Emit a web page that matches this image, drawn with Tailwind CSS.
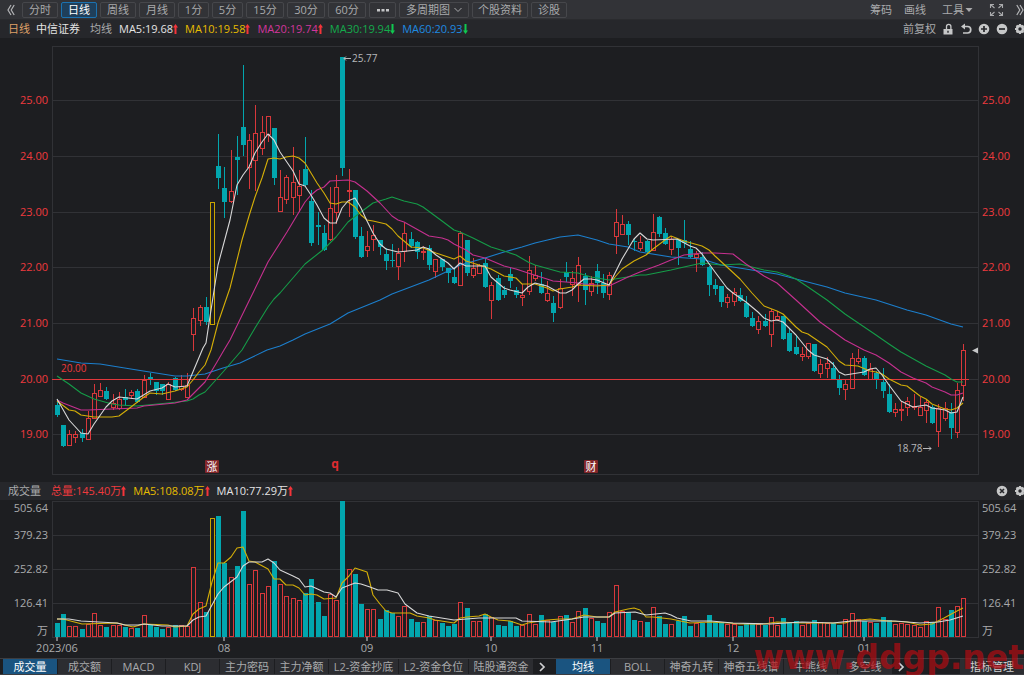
<!DOCTYPE html>
<html lang="zh-CN">
<head>
  <meta charset="UTF-8" />
  <meta name="viewport" content="width=device-width, initial-scale=1.0"/>
  <title>中信证券 - 日线</title>
  <script src="https://cdn.jsdelivr.net/npm/@tailwindcss/browser@4"></script>
  <style>
    body {
      font-family: 'Open Sans', 'Noto Sans CJK SC', sans-serif;
    }
  </style>
</head>
<body class="bg-[#1d1e21] text-[#a9aaac] text-[11px] leading-4 overflow-hidden">

  <svg class="hidden">
    <symbol id="gear" viewBox="0 0 12 12">
      <path d="M6 1v10M1 6h10M2.5 2.5l7 7M9.5 2.5l-7 7" stroke="currentColor" stroke-width="2.2"/>
      <circle cx="6" cy="6" r="3" fill="none" stroke="currentColor" stroke-width="2.4"/>
      <circle cx="6" cy="6" r="1.7" fill="#26272b"/>
    </symbol>
    <symbol id="up" viewBox="0 0 5 10"><path d="M2.5 0L5 3.5H3.5V10h-2V3.5H0z" fill="#f5343a"/></symbol>
    <symbol id="down" viewBox="0 0 5 10"><path d="M2.5 10L5 6.500H3.500V0h-2v6.500H0z" fill="#10c850"/></symbol>
  </svg>

  <!-- period toolbar -->
  <nav class="flex items-center h-5 bg-[#323337] border-b border-[#2a2b2e] whitespace-nowrap overflow-hidden">
    <button class="w-[22px] pl-[7px]" aria-label="收起">
      <svg class="w-2 h-3" viewBox="0 0 8 12" fill="none" stroke="#b4b5b7" stroke-width="1.2"><path d="M4 1L1 6l3 5M7.200 1l-3 5 3 5"/></svg>
    </button>
    <div class="flex items-center gap-[3px]">
      <button class="w-9 h-4 leading-[14px] border border-[#46474b] rounded-xs">分时</button>
      <button class="w-9 h-4 leading-[14px] border border-[#1b72b0] rounded-xs bg-[#1f3f5a] text-white">日线</button>
      <button class="w-9 h-4 leading-[14px] border border-[#46474b] rounded-xs">周线</button>
      <button class="w-9 h-4 leading-[14px] border border-[#46474b] rounded-xs">月线</button>
      <button class="w-[31px] h-4 leading-[14px] border border-[#46474b] rounded-xs">1分</button>
      <button class="w-[31px] h-4 leading-[14px] border border-[#46474b] rounded-xs">5分</button>
      <button class="w-[38px] h-4 leading-[14px] border border-[#46474b] rounded-xs">15分</button>
      <button class="w-[38px] h-4 leading-[14px] border border-[#46474b] rounded-xs">30分</button>
      <button class="w-[38px] h-4 leading-[14px] border border-[#46474b] rounded-xs">60分</button>
      <button class="w-[27px] h-4 flex items-center justify-center border border-[#46474b] rounded-xs" aria-label="更多">
        <svg class="w-3 h-3" viewBox="0 0 12 12" fill="#c4c5c7"><path d="M0 5h3v2.500H0zM4.500 5h3v2.500h-3zM9 5h3v2.500H9z"/></svg>
      </button>
      <button class="w-[70px] h-4 leading-[14px] flex items-center justify-center gap-1 border border-[#46474b] rounded-xs">多周期图
        <svg class="w-2 h-2" viewBox="0 0 8 8" fill="none" stroke="currentColor"><path d="M.5 2L4 5.500 7.500 2"/></svg>
      </button>
      <button class="w-14 h-4 leading-[14px] border border-[#46474b] rounded-xs">个股资料</button>
      <button class="w-9 h-4 leading-[14px] border border-[#46474b] rounded-xs">诊股</button>
    </div>
    <div class="ml-auto flex items-center">
      <button class="mr-3">筹码</button>
      <button class="mr-4">画线</button>
      <button class="mr-4 flex items-center gap-px">工具
        <svg class="w-2 h-2" viewBox="0 0 8 8" fill="currentColor"><path d="M.5 2h7L4 6z"/></svg>
      </button>
      <button class="mr-3" aria-label="全屏">
        <svg class="w-[15px] h-[14px]" viewBox="0 0 15 14" fill="none" stroke="currentColor" stroke-width="1.100"><path d="M1.500 5V1.500H5M1.500 1.500L5.500 5M10 1.500h3.500V5M13.500 1.500L9.500 5M1.500 9v3.500H5M1.500 12.500L5.500 9M10 12.500h3.500V9M13.500 12.500L9.500 9"/></svg>
      </button>
      <button aria-label="展开">
        <svg class="w-2 h-3" viewBox="0 0 8 12" fill="none" stroke="#b4b5b7" stroke-width="1.200"><path d="M.8 1l3 5-3 5M4 1l3 5-3 5"/></svg>
      </button>
    </div>
  </nav>

  <!-- moving averages -->
  <div class="flex items-center h-[18px] pl-2 bg-[#26272b] whitespace-nowrap overflow-hidden">
    <span class="text-[#dfa068] mr-[6px]">日线</span>
    <span class="text-[#e4e4e4] mr-[10px]">中信证券</span>
    <span class="mr-[7px]">均线</span>
    <span class="flex items-center text-[#e4e4e4] mr-[7px]">MA5:19.68<svg class="w-[5px] h-[10px]"><use href="#up"/></svg></span>
    <span class="flex items-center text-[#e6bd00] mr-[7px]">MA10:19.58<svg class="w-[5px] h-[10px]"><use href="#up"/></svg></span>
    <span class="flex items-center text-[#d2369c] mr-[7px]">MA20:19.74<svg class="w-[5px] h-[10px]"><use href="#up"/></svg></span>
    <span class="flex items-center text-[#14ab4c] mr-[7px]">MA30:19.94<svg class="w-[5px] h-[10px]"><use href="#down"/></svg></span>
    <span class="flex items-center text-[#1e8ae0]">MA60:20.93<svg class="w-[5px] h-[10px]"><use href="#down"/></svg></span>
    <div class="ml-auto -mr-0.5 flex items-center gap-[6px] text-[#c6c7c8]">
      <button class="text-[#a9aaac]">前复权</button>
      <button aria-label="锁定"><svg class="w-3 h-3" viewBox="0 0 12 12"><path d="M1.500 6h9v5.500h-9z" fill="currentColor"/><path d="M4.500 6V3.500a2.200 2.200 0 0 1 4.400 0V6" fill="none" stroke="currentColor" stroke-width="1.300"/><path d="M5.300 7.800h1.400v2H5.300z" fill="#26272b"/></svg></button>
      <button aria-label="撤销"><svg class="w-3 h-3" viewBox="0 0 12 12"><path d="M3 3.500h4.500a3.200 3.200 0 0 1 0 6.500H3" fill="none" stroke="currentColor" stroke-width="1.700"/><path d="M5 .5v6L1 3.500z" fill="currentColor"/></svg></button>
      <button aria-label="放大"><svg class="w-3 h-3" viewBox="0 0 12 12"><circle cx="6" cy="6" r="5.300" fill="currentColor"/><path d="M6 3v6M3 6h6" stroke="#26272b" stroke-width="1.700"/></svg></button>
      <button aria-label="缩小"><svg class="w-3 h-3" viewBox="0 0 12 12"><circle cx="6" cy="6" r="5.300" fill="currentColor"/><path d="M3 6h6" stroke="#26272b" stroke-width="1.700"/></svg></button>
      <button aria-label="设置"><svg class="w-3 h-3"><use href="#gear"/></svg></button>
    </div>
  </div>

  <!-- price chart -->
  <svg class="block w-full" viewBox="0 38 1024 444" font-size="11">
    <g stroke="#313236" fill="none" shape-rendering="crispEdges">
      <path d="M52.500 46.500H978.500V474.500H52.500z"/>
      <path d="M53 100.500H978M53 156.500H978M53 212.500H978M53 267.500H978M53 323.500H978M53 379.500H978M53 434.500H978"/>
    </g>
    <g id="candles" shape-rendering="crispEdges"></g>
    <path d="M52 379.500H969" stroke="#e0383c" shape-rendering="crispEdges"/>
    <g fill="none" stroke-width="1.100" stroke-linejoin="round">
      <polyline stroke="#1c7fcd" points="57,359 81,363 100,364 137,370 175,376 187,376 205,374 223,368 240,363 267,350 280,346 293,340 305,334 330,324 348,313 380,300 392,294 429,280 448,271 460,265 485,258 504,252 522,247 535,243 560,237 578,235 597,240 609,244 628,247 640,252 671,257 702,259 721,265 733,267 758,271 777,274 796,279 827,287 845,293 876,300 907,310 926,315 951,324 963,327"/>
      <polyline stroke="#159c48" points="57,376 69,384 81,393 94,399 112,404 119,405 137,406 168,403 187,401 193,399 199,395 205,392 223,372 242,350 255,328 268,307 274,299 280,293 305,264 324,249 336,237 348,222 361,212 373,203 386,199 392,197 404,201 417,204 423,207 442,221 454,230 460,232 473,238 491,247 504,251 516,255 528,262 535,265 560,272 578,273 591,277 609,280 615,279 640,275 646,275 671,270 684,267 702,263 721,265 740,264 752,267 764,270 777,272 789,276 796,279 808,287 827,300 845,314 876,335 889,344 901,352 926,366 945,375 951,379 957,382 963,382"/>
      <polyline stroke="#c5308f" points="57,400 63,403 81,410 88,410 137,408 144,406 175,403 187,400 205,382 217,362 224,350 230,340 249,301 268,262 287,232 305,202 311,195 317,190 324,187 330,181 348,180 355,182 367,191 380,203 392,216 398,220 404,222 429,236 442,238 448,240 454,244 466,250 473,255 485,258 504,266 516,269 528,273 547,279 553,281 566,282 578,283 584,284 609,286 628,277 640,272 659,265 671,260 684,255 702,253 715,253 733,254 746,264 764,276 777,283 796,300 820,322 845,340 864,350 876,355 889,363 901,372 913,378 926,383 932,387 945,392 951,395 957,395 963,393"/>
      <polyline stroke="#d4ae08" points="57,401 69,410 75,411 81,415 94,417 112,417 119,416 131,407 144,397 150,393 162,394 175,391 187,387 193,380 199,372 205,365 211,350 218,323 230,288 242,240 249,216 255,197 262,178 268,159 274,158 280,159 286,157 293,156 299,158 305,163 311,173 317,183 324,193 330,203 336,204 342,202 348,202 355,207 361,215 367,220 373,221 386,224 392,229 398,236 404,241 411,247 423,248 436,253 454,259 460,256 466,261 479,265 491,269 504,276 516,278 522,284 535,284 547,288 553,291 560,289 572,287 578,285 597,286 609,285 615,277 622,269 634,261 640,258 646,255 653,249 665,240 671,236 684,241 702,246 709,250 715,256 727,267 740,279 752,293 764,306 777,311 783,314 796,327 802,332 808,334 827,347 839,361 845,365 858,366 870,371 876,372 882,374 889,379 901,385 907,386 920,396 926,399 932,404 945,409 951,410 957,408 963,403"/>
      <polyline stroke="#d8d8d8" points="57,399 69,420 81,433 88,434 94,424 106,407 112,401 119,397 137,399 150,391 162,388 168,384 175,387 187,386 203,348 206,343 209,323 218,265 230,220 237,185 243,175 249,167 255,153 262,142 268,134 274,140 280,152 293,171 299,184 305,186 311,195 317,205 324,218 330,223 336,223 342,208 348,201 355,198 361,208 367,221 373,233 380,244 386,249 398,252 417,250 423,247 429,249 436,255 448,263 454,269 460,263 466,266 485,266 491,277 504,288 510,290 522,293 528,287 535,283 547,286 560,293 566,293 572,290 578,284 584,279 591,279 597,280 609,285 615,273 622,259 628,249 634,239 640,233 647,239 653,240 677,239 690,246 696,248 702,254 715,272 727,288 733,293 746,302 758,312 764,318 771,321 777,320 783,322 796,335 808,350 814,355 827,359 833,364 839,372 845,375 864,372 870,369 876,368 882,375 889,385 895,393 901,401 907,404 913,407 926,405 932,408 945,410 951,413 957,412 963,397"/>
    </g>
    <g fill="#ef3a3e" text-anchor="end">
      <text x="48" y="104">25.00</text><text x="48" y="160">24.00</text><text x="48" y="216">23.00</text><text x="48" y="271">22.00</text>
      <text x="48" y="327">21.00</text><text x="48" y="383">20.00</text><text x="48" y="438">19.00</text>
    </g>
    <g fill="#ef3a3e">
      <text x="982" y="104">25.00</text><text x="982" y="160">24.00</text><text x="982" y="216">23.00</text><text x="982" y="271">22.00</text>
      <text x="982" y="327">21.00</text><text x="982" y="383">20.00</text><text x="982" y="438">19.00</text>
      <text x="61" y="372" font-size="10">20.00</text>
    </g>
    <g fill="#b6b7b9" font-size="10">
      <text x="352" y="62">25.77</text>
      <text x="897" y="452">18.78</text>
    </g>
    <path d="M344 58.500h7M346 56.500l-2 2 2 2M923 448.500h8M929 446.500l2 2-2 2" stroke="#b6b7b9" fill="none"/>
    <path d="M972 350.500l6-3v6z" fill="#c6c7c8"/>
    <rect x="205" y="460" width="14" height="13" rx="1" fill="#822629"/>
    <text x="212" y="471" text-anchor="middle" fill="#fff">涨</text>
    <rect x="584" y="460" width="14" height="13" rx="1" fill="#822629"/>
    <text x="591" y="471" text-anchor="middle" fill="#fff">财</text>
    <text x="335" y="468" text-anchor="middle" font-size="12" font-weight="700" fill="#e02c30">q</text>
  </svg>

  <!-- volume header -->
  <div class="flex items-center h-[18px] pl-2 bg-[#26272b] whitespace-nowrap overflow-hidden">
    <span class="mr-[10px]">成交量</span>
    <span class="flex items-center text-[#ef3a3e] mr-[7px]">总量:145.40万<svg class="w-[5px] h-[10px]"><use href="#up"/></svg></span>
    <span class="flex items-center text-[#e6bd00] mr-[7px]">MA5:108.08万<svg class="w-[5px] h-[10px]"><use href="#up"/></svg></span>
    <span class="flex items-center text-[#e4e4e4]">MA10:77.29万<svg class="w-[5px] h-[10px]"><use href="#up"/></svg></span>
    <div class="ml-auto -mr-0.5 flex items-center gap-[6px] text-[#c6c7c8]">
      <button aria-label="关闭"><svg class="w-3 h-3" viewBox="0 0 12 12"><circle cx="6" cy="6" r="5.300" fill="currentColor"/><path d="M4 4l4 4M8 4l-4 4" stroke="#26272b" stroke-width="1.600"/></svg></button>
      <button aria-label="设置"><svg class="w-3 h-3"><use href="#gear"/></svg></button>
    </div>
  </div>

  <!-- volume chart -->
  <svg class="block w-full" viewBox="0 500 1024 158" font-size="11" fill="#a9aaac">
    <g stroke="#313236" fill="none" shape-rendering="crispEdges">
      <path d="M52.500 501.500H978.500V637.500H52.500zM53 535.500H978M53 569.500H978M53 603.500H978"/>
    </g>
    <g id="volumes" shape-rendering="crispEdges"></g>
    <g fill="none" stroke-width="1.100" stroke-linejoin="round">
      <polyline stroke="#d4ae08" points="57,619 63,619 82,624 117,623 133,627 144,624 168,625 175,627 187,626 193,614 199,609 206,606 212,582 218,563 224,563 231,557 237,548 243,547 249,561 255,562 268,569 274,579 280,579 286,585 293,585 299,588 305,595 311,594 317,595 324,599 336,598 342,583 349,576 355,568 361,570 367,572 370,583 373,595 380,604 386,611 392,613 410,613 417,616 429,618 435,620 454,623 460,618 467,617 479,616 485,614 491,617 498,620 510,621 522,625 528,623 547,620 560,619 572,619 584,615 597,617 609,617 615,612 628,609 634,608 640,610 646,617 653,617 671,619 690,623 709,622 729,623 739,624 764,624 777,622 802,623 845,623 851,621 870,619 888,621 907,622 920,625 932,624 938,621 944,618 957,611 963,608"/>
      <polyline stroke="#d8d8d8" points="57,619 69,619 81,621 117,623 125,625 138,625 144,624 162,626 187,626 193,620 199,617 206,616 212,605 218,594 224,587 237,577 243,566 249,562 262,562 268,559 274,563 280,570 293,576 299,579 305,587 311,586 324,592 330,593 336,597 342,588 355,583 361,584 370,587 378,590 387,590 398,593 405,604 417,613 429,616 454,620 479,618 516,618 522,621 551,622 572,619 584,617 609,617 615,613 635,612 646,615 665,613 671,615 677,618 691,621 711,621 733,623 770,624 802,622 833,623 851,621 895,621 920,623 938,622 950,620 963,616"/>
    </g>
    <path d="M57 637v4M224 637v4M367 637v4M491 637v4M597 637v4M733 637v4M864 637v4" stroke="#d8d8d8"/>
    <g text-anchor="end">
      <text x="48" y="512">505.64</text><text x="48" y="539">379.23</text><text x="48" y="573">252.82</text><text x="48" y="607">126.41</text><text x="48" y="635">万</text>
    </g>
    <text x="982" y="512">505.64</text><text x="982" y="539">379.23</text><text x="982" y="573">252.82</text><text x="982" y="607">126.41</text><text x="982" y="635">万</text>
    <g text-anchor="middle">
      <text x="57" y="652">2023/06</text><text x="224" y="652">08</text><text x="367" y="652">09</text><text x="491" y="652">10</text>
      <text x="597" y="652">11</text><text x="733" y="652">12</text><text x="864" y="652">01</text>
    </g>
  </svg>

  <!-- indicator tabs -->
  <div class="relative">
    <div class="flex h-[17px] pl-[3px] border-y border-[#3c3d41] whitespace-nowrap overflow-hidden">
      <div class="flex gap-px">
        <button class="w-[54px] bg-[#1a5480] text-white">成交量</button>
        <button class="w-[53px] bg-[#2c2d31]">成交额</button>
        <button class="w-[53px] bg-[#2c2d31]">MACD</button>
        <button class="w-[53px] bg-[#2c2d31]">KDJ</button>
        <button class="w-[54px] bg-[#2c2d31]">主力密码</button>
        <button class="w-[53px] bg-[#2c2d31]">主力净额</button>
        <button class="w-[69px] bg-[#2c2d31]">L2-资金抄底</button>
        <button class="w-[69px] bg-[#2c2d31]">L2-资金仓位</button>
        <button class="w-[64px] bg-[#2c2d31]">陆股通资金</button>
      </div>
      <button class="w-[23px] flex items-center justify-center pr-1.5" aria-label="更多指标">
        <svg class="w-2 h-[10px]" viewBox="0 0 8 10" fill="none" stroke="#d0d1d3" stroke-width="1.700"><path d="M2 1l4 4-4 4"/></svg>
      </button>
      <div class="flex gap-px">
        <button class="w-[54px] bg-[#1a5480] text-white">均线</button>
        <button class="w-[53px] bg-[#2c2d31]">BOLL</button>
        <button class="w-[53px] bg-[#2c2d31]">神奇九转</button>
        <button class="w-[64px] bg-[#2c2d31]">神奇五线谱</button>
        <button class="w-[53px] bg-[#2c2d31]">牛熊线</button>
        <button class="w-[54px] bg-[#2c2d31]">多空线</button>
      </div>
      <button class="w-[23px] flex items-center justify-center pr-1.5" aria-label="更多主图指标">
        <svg class="w-2 h-[10px]" viewBox="0 0 8 10" fill="none" stroke="#d0d1d3" stroke-width="1.700"><path d="M2 1l4 4-4 4"/></svg>
      </button>
      <button class="ml-auto w-16 bg-[#2c2d31] text-[#d0d1d3]">指标管理</button>
    </div>
    <div class="absolute right-0 bottom-0 font-['DejaVu_Sans'] font-bold text-[33px] leading-[34px] text-[#b40c12]/70 pointer-events-none">www.ddgp.net</div>
  </div>

  <script>
    // kind (r up, g down, y limit-up), high, body top, body bottom, low, volume top
    const bars = `
      g,399,405,415,416,623 g,425,425,446,446,614 r,430,434,445,445,626 r,431,434,437,442,626 g,429,433,438,441,629
      r,411,418,439,439,624 r,384,393,418,418,613 r,383,390,396,396,625 g,387,391,399,399,627 r,394,403,407,409,625
      r,392,399,408,409,625 g,389,397,400,405,627 r,390,392,395,398,628 g,389,391,402,402,628 r,375,380,397,397,615
      g,373,377,379,384,625 g,382,382,391,394,627 g,384,384,391,394,629 r,382,384,399,399,627 g,377,378,390,390,625
      r,375,386,389,390,625 r,373,385,397,397,626 r,308,318,334,350,567 r,305,307,320,325,602 g,297,307,322,324,612
      y,202,202,324,324,518 g,134,166,178,188,516 g,167,188,202,217,563 r,150,191,201,202,577 g,136,157,160,194,566
      g,65,127,145,155,511 r,134,140,167,188,584 r,105,133,160,190,570 r,116,132,148,154,593 r,116,116,134,141,586
      g,128,128,178,184,561 r,170,197,211,211,584 r,175,177,199,203,596 r,147,182,197,214,598 r,170,186,195,211,600
      g,137,169,185,185,593 g,190,201,243,245,579 g,212,225,227,244,602 g,225,233,250,250,616 r,187,208,239,240,594
      r,175,187,212,223,600 g,57,57,168,175,501 r,169,190,191,216,569 g,190,190,237,238,574 g,227,236,257,257,604
      r,231,246,250,256,609 r,225,235,239,250,609 g,240,240,247,254,619 g,248,254,261,269,610 g,244,260,261,266,613
      r,248,253,266,279,616 r,223,233,251,261,606 g,232,239,246,247,619 g,241,242,252,258,622 r,246,251,252,259,622
      g,245,248,265,269,616 r,259,259,271,277,620 g,259,259,267,270,623 g,268,268,273,282,626 g,267,277,283,283,624
      r,231,233,285,285,602 g,240,240,273,275,608 r,258,268,275,277,621 r,264,265,273,273,621 g,258,263,287,287,614
      r,282,285,300,318,617 g,275,278,300,300,625 g,286,290,295,297,626 g,268,274,281,287,621 g,287,290,295,297,626
      r,284,295,297,305,625 r,256,270,291,294,614 r,265,275,278,280,624 g,272,284,293,293,615 r,281,293,300,301,620
      g,296,303,313,321,622 r,279,288,307,308,616 g,262,272,277,281,615 r,271,278,284,295,622 r,257,265,284,301,611
      g,273,276,290,304,608 r,276,283,291,295,618 g,264,271,283,293,621 g,274,283,293,297,623 r,272,275,294,299,612
      r,209,222,236,253,585 r,215,224,234,234,611 g,221,224,235,244,612 g,239,241,242,250,620 r,236,242,248,250,621
      g,240,241,252,252,622 r,214,232,250,250,607 g,216,217,234,236,616 g,228,233,244,244,624 r,236,239,249,254,624
      g,239,239,248,264,621 g,220,240,243,247,616 g,241,249,257,257,626 r,251,254,257,271,623 g,252,257,265,265,623
      g,266,267,285,295,615 g,279,285,289,294,622 g,286,286,302,306,622 r,294,297,302,307,624 r,288,292,301,305,624
      g,288,295,301,301,626 g,296,303,317,317,624 g,312,318,326,326,624 r,316,321,329,333,624 g,314,321,326,326,625
      r,309,311,334,346,617 r,311,316,319,320,625 g,316,316,339,339,618 g,329,333,351,351,622 g,335,347,354,354,621
      r,347,354,356,360,625 r,343,343,356,358,623 g,344,344,371,371,620 r,359,364,373,377,622 r,357,363,368,377,623
      g,362,368,379,379,623 g,375,380,388,394,625 r,379,384,389,399,619 r,353,358,388,388,613 r,349,358,361,363,619
      g,356,358,375,375,621 r,363,369,379,379,622 g,371,373,379,388,623 g,368,382,391,397,617 g,384,394,412,412,620
      r,403,409,412,416,624 r,401,409,410,420,623 r,397,401,407,415,624 r,394,406,407,409,625 r,397,407,415,415,627
      r,399,402,410,422,621 g,405,407,423,423,622 r,404,408,431,446,607 r,402,408,418,420,619 g,403,412,428,438,610
      r,383,390,432,437,606 r,344,350,385,400,598`.trim().split(/\s+/).map(s => s.split(","));

    const colors = { r: "#d8383b", g: "#02a6ae", y: "#c9a400" };
    const step = 906.6 / (bars.length - 1);

    // box with its bottom row included; up days are hollow
    function box(kind, x, top, bottom) {
      const h = Math.max(bottom - top, 1);
      if (kind === "g") {
        return `<rect x="${x - 2}" y="${top}" width="5" height="${h}" fill="${colors.g}"/>`;
      }
      return `<rect x="${x - 1.5}" y="${top + 0.5}" width="4" height="${h}" fill="#1d1e21" stroke="${colors[kind]}"/>`;
    }

    let candles = "";
    let volumes = "";
    bars.forEach(([kind, ...values], i) => {
      const [high, top, bottom, low, vol] = values.map(Number);
      const x = Math.round(56.7 + i * step);
      candles += `<rect x="${x}" y="${high}" width="1" height="${low - high + 1}" fill="${colors[kind]}"/>`;
      candles += box(kind, x, top, bottom);
      volumes += box(kind, x, vol, kind === "g" ? 637 : 636);
    });
    document.getElementById("candles").innerHTML = candles;
    document.getElementById("volumes").innerHTML = volumes;
  </script>
</body>
</html>
